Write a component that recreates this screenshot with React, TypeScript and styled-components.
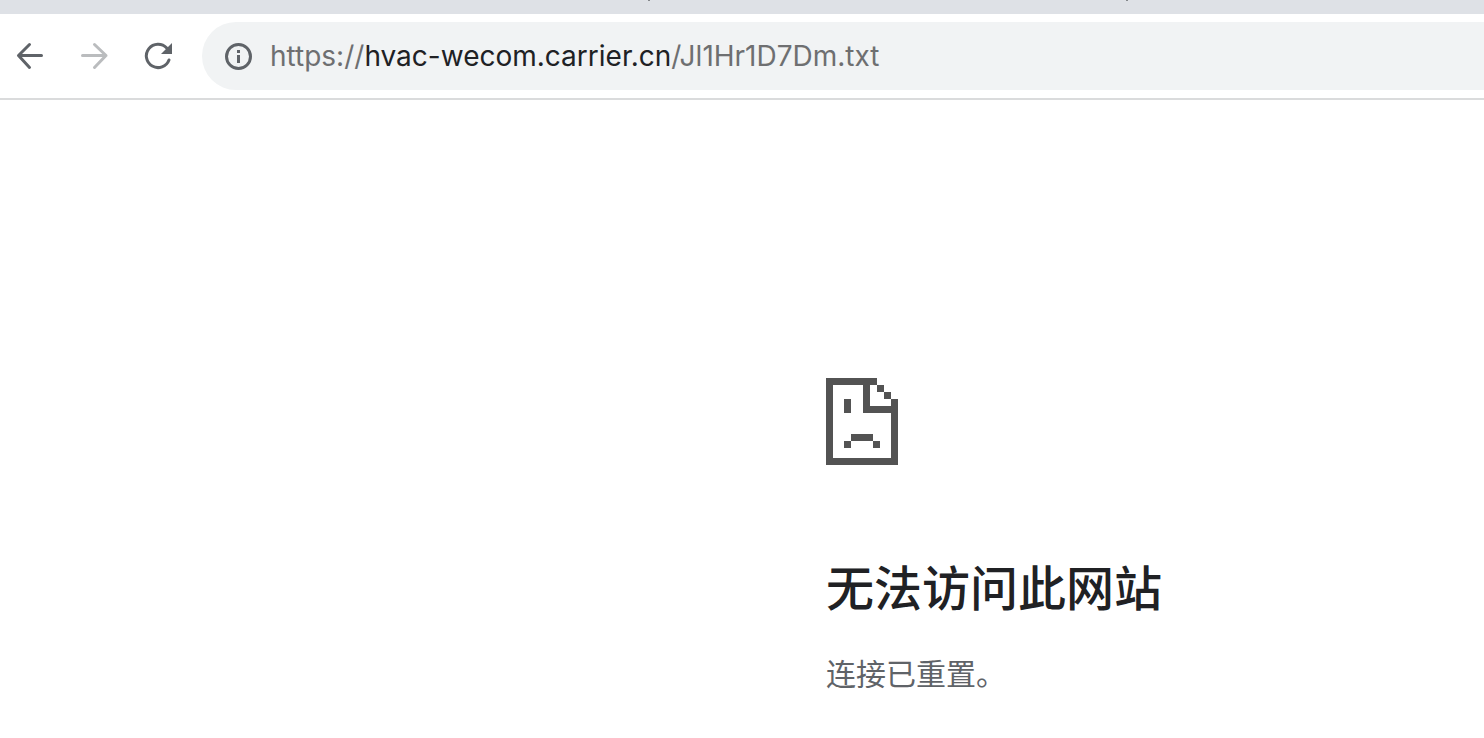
import React, { useState } from "react";
import styled, { createGlobalStyle } from "styled-components";

const GlobalStyle = createGlobalStyle`
  * { box-sizing: border-box; }
  body {
    margin: 0;
    background: #ffffff;
    font-family: Inter, "Noto Sans CJK SC", sans-serif;
  }
`;

const Page = styled.div`
  display: flex;
  flex-direction: column;
  min-height: 100vh;
  overflow-x: hidden;
`;

const TabStrip = styled.div`
  display: grid;
  grid-template-columns: 648fr 478fr 358fr;
  height: 14px;
  background: #dee1e6;
`;

const TabEdge = styled.span<{ $marked?: boolean }>`
  width: 2px;
  height: 1px;
  background: ${(p) => (p.$marked ? "#85888c" : "transparent")};
`;

const Toolbar = styled.header`
  display: flex;
  align-items: center;
  height: 86px;
  border-bottom: 2px solid #dadbdc;
`;

const NavButtons = styled.nav`
  display: flex;
  gap: 4px;
  padding-right: 14px;
`;

const NavButton = styled.button`
  display: grid;
  place-items: center;
  width: 60px;
  height: 60px;
  padding: 0;
  border: 0;
  border-radius: 30px;
  background: none;
  color: #5f6368;

  &:disabled { color: #babcbe; }
`;

const Omnibox = styled.div`
  display: flex;
  flex: 1;
  align-items: center;
  gap: 18px;
  height: 68px;
  padding-left: 22px;
  border-radius: 34px 0 0 34px;
  background: #f1f3f4;
`;

const SiteInfo = styled.button`
  display: grid;
  place-items: center;
  padding: 0;
  border: 0;
  background: none;
  color: #5f6368;
`;

const AddressField = styled.div`
  display: grid;
  flex: 1;
  align-items: center;
  font-size: 28px;
  line-height: 36px;

  > * { grid-area: 1 / 1; }
`;

const AddressInput = styled.input`
  width: 100%;
  padding: 0;
  border: 0;
  outline: 0;
  background: none;
  color: transparent;
  font: inherit;

  &:focus { color: #202124; }
  &:focus + * { visibility: hidden; }
`;

const AddressDisplay = styled.div`
  color: #6e6f71;
  white-space: nowrap;
  pointer-events: none;
`;

const Host = styled.span`
  color: #202124;
`;

const Content = styled.main`
  display: grid;
  grid-template-columns: 413fr 329fr;
  padding-top: 278px;
`;

const ErrorMessage = styled.section`
  grid-column: 2;
  min-width: 0;
`;

const SadPage = styled.svg`
  display: block;
`;

const Title = styled.h1`
  margin: 90px 0 0;
  color: #202124;
  font-family: "Noto Sans CJK SC", sans-serif;
  font-size: 48px;
  font-weight: 500;
  line-height: 60px;
`;

const Reason = styled.p`
  margin: 37px 0 0;
  color: #5f6368;
  font-family: "Noto Sans CJK SC", sans-serif;
  font-size: 30px;
  line-height: 40px;
`;

const ArrowIcon = ({ forward = false }: { forward?: boolean }) => (
  <svg width="60" height="60" viewBox="0 0 60 60" fill="none" stroke="currentColor"
    strokeWidth="3" strokeLinecap="round" strokeLinejoin="round" aria-hidden="true">
    <path d={forward ? "M18.5 29.5H42M30.5 18.5L42 29.5L30.5 41.5" : "M41.5 29.5H18.5M29.5 18.5L18.5 29.5L29.5 41.5"} />
  </svg>
);

const ReloadIcon = () => (
  <svg width="60" height="60" viewBox="0 0 60 60" fill="none" aria-hidden="true">
    <path d="M41 34A11.7 11.7 0 1 1 38.7 22" stroke="currentColor" strokeWidth="3" strokeLinecap="round" />
    <path d="M44 17V28H33Z" fill="currentColor" />
  </svg>
);

const InfoIcon = () => (
  <svg width="28" height="28" viewBox="0 0 28 28" fill="none" aria-hidden="true">
    <circle cx="14.5" cy="14.5" r="12" stroke="currentColor" strokeWidth="3" />
    <path d="M13 8h3v3h-3zM13 13h3v8h-3z" fill="currentColor" />
  </svg>
);

export default function App() {
  const [url, setUrl] = useState("https://hvac-wecom.carrier.cn/Jl1Hr1D7Dm.txt");
  const [, scheme = "", host = "", path = ""] = url.match(/^(\w+:\/\/)?([^/]*)(.*)$/) ?? [];

  return (
    <Page>
      <GlobalStyle />
      <TabStrip>
        <TabEdge />
        <TabEdge $marked />
        <TabEdge $marked />
      </TabStrip>
      <Toolbar>
        <NavButtons aria-label="导航">
          <NavButton aria-label="返回"><ArrowIcon /></NavButton>
          <NavButton aria-label="前进" disabled><ArrowIcon forward /></NavButton>
          <NavButton aria-label="重新加载"><ReloadIcon /></NavButton>
        </NavButtons>
        <Omnibox>
          <SiteInfo aria-label="查看网站信息"><InfoIcon /></SiteInfo>
          <AddressField>
            <AddressInput aria-label="地址" spellCheck={false} value={url} onChange={(e) => setUrl(e.target.value)} />
            <AddressDisplay aria-hidden="true">{scheme}<Host>{host}</Host>{path}</AddressDisplay>
          </AddressField>
        </Omnibox>
      </Toolbar>
      <Content>
        <ErrorMessage>
          <SadPage width="72" height="87" viewBox="0 0 72 87" fill="#535353" shapeRendering="crispEdges" aria-hidden="true">
            <path d="M0 0H51V7H44V28H65V21H72V87H0ZM7 7V80H65V35H37V7Z" fillRule="evenodd" />
            <path d="M51 7h7v7h-7zM58 14h7v7h-7zM18 21h7v14h-7zM25 56h22v7H25zM18 63h7v7h-7zM47 63h7v7h-7z" />
          </SadPage>
          <Title>无法访问此网站</Title>
          <Reason>连接已重置。</Reason>
        </ErrorMessage>
      </Content>
    </Page>
  );
}
